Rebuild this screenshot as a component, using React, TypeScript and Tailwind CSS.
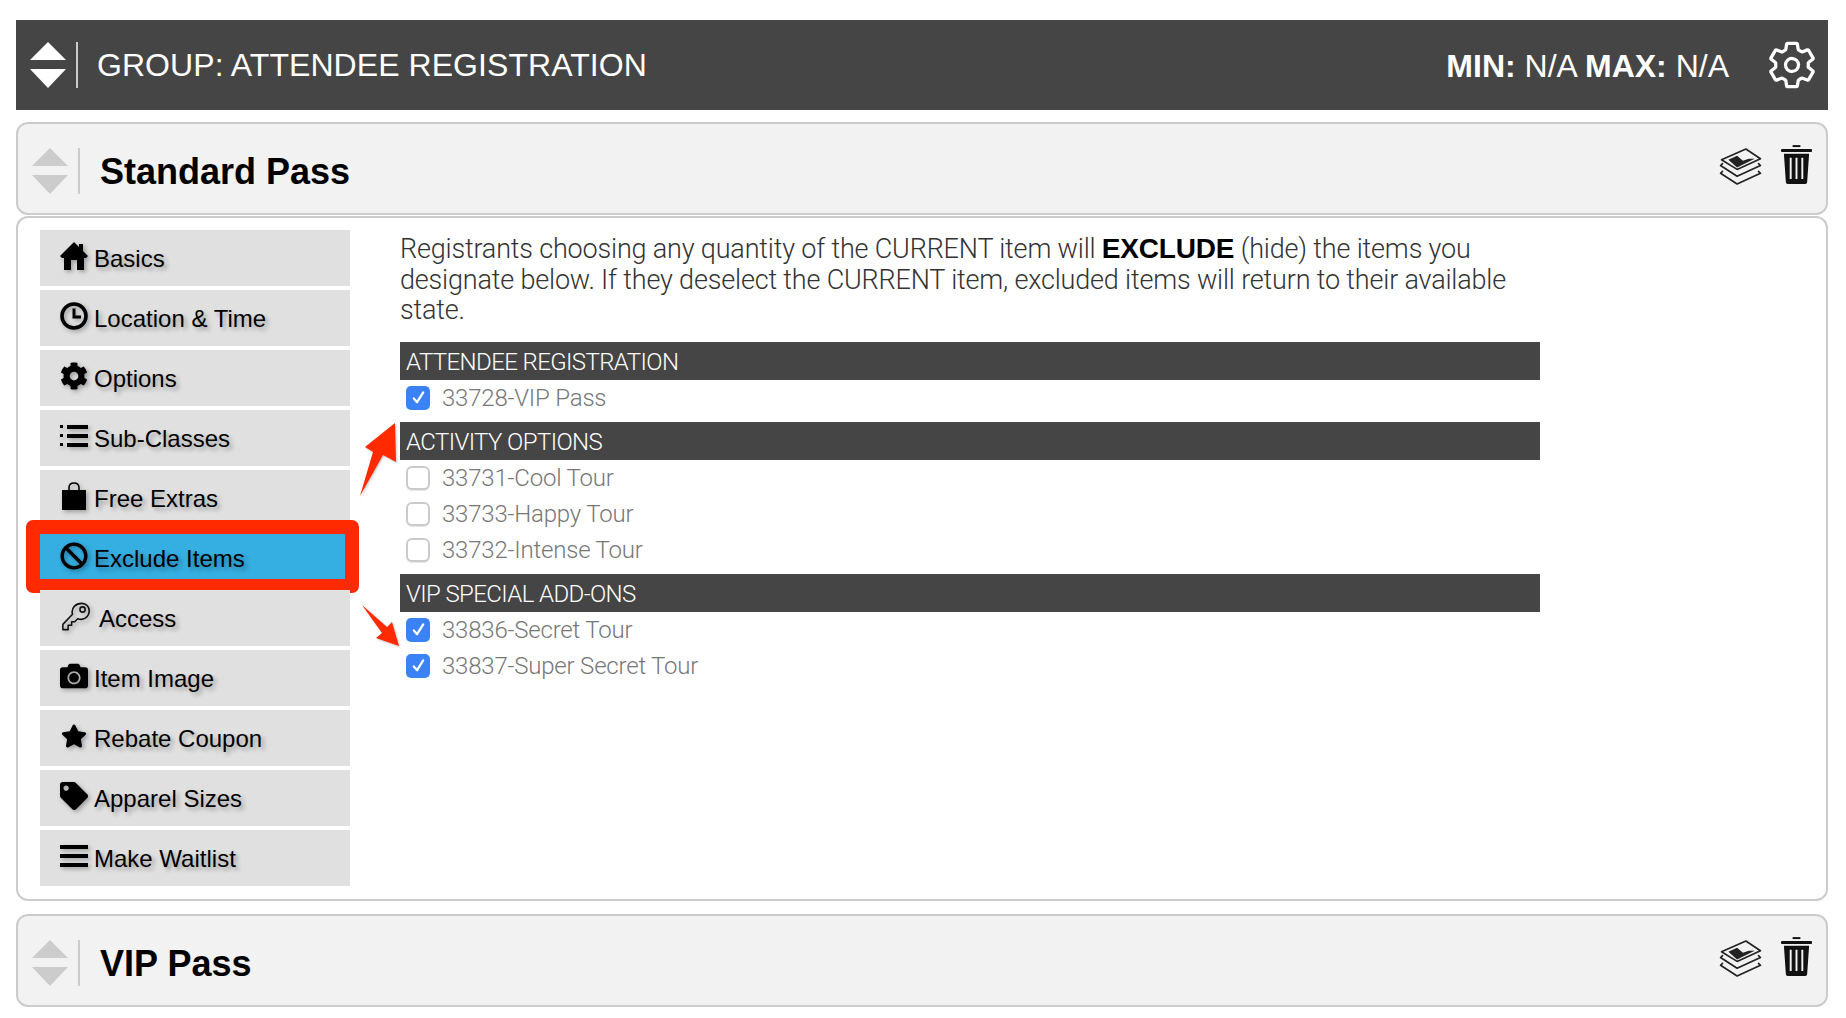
import type { ReactNode } from 'react'
import { FaCog, FaBan, FaCamera, FaStar, FaTag } from 'react-icons/fa'
import { IoSettingsOutline } from 'react-icons/io5'

function SortArrows({ color, line }: { color: string; line: string }) {
  return (
    <div className="flex items-center">
      <svg width="36" height="46" viewBox="0 0 36 46" className={color} fill="currentColor">
        <polygon points="18,0 36,18 0,18" />
        <polygon points="0,27 36,27 18,46" />
      </svg>
      <div className={`ml-[10px] h-[46px] w-[2px] ${line}`} />
    </div>
  )
}

function LayersIcon() {
  return (
    <svg width="44" height="37" viewBox="0 0 44 38" fill="none" stroke="#222" strokeWidth="1.7" strokeLinejoin="round" strokeLinecap="round">
      <path d="M2 12 L27 1 L42 11 L18 22 Z" />
      <path d="M9 12 L18 8 L24 13 L30 11 L36 11 L18 20 Z" fill="#222" stroke="none" />
      <path d="M3 16 L1 18 L18 29 L42 18 L40 16" />
      <path d="M3 24 L1 26 L18 37 L42 26 L40 24" />
    </svg>
  )
}

function TrashIcon() {
  return (
    <svg width="31" height="39" viewBox="0 0 32 40">
      <rect x="12" y="0" width="8" height="2" fill="#111" />
      <rect x="0" y="4" width="32" height="3" rx="1" fill="#111" />
      <path d="M3 9 H29 L27 38 Q27 40 25 40 H7 Q5 40 5 38 Z" fill="#111" />
      <path d="M10 13 V35 M16 13 V35 M22 13 V35" stroke="#f2f2f2" strokeWidth="2" />
    </svg>
  )
}

function ItemCard({ title }: { title: string }) {
  return (
    <div className="flex h-[93px] items-center rounded-xl border-2 border-[#cccccc] bg-[#f2f2f2] px-[14px] pt-1">
      <SortArrows color="text-[#cccccc]" line="bg-[#cccccc]" />
      <h2 className="ml-5 pt-[2px] font-['Liberation_Sans',sans-serif] text-[36px] font-bold text-black">{title}</h2>
      <div className="mb-2 ml-auto flex items-center gap-[18px]">
        <LayersIcon />
        <span className="mb-[5px]">
          <TrashIcon />
        </span>
      </div>
    </div>
  )
}

function KeyIcon() {
  return (
    <svg width="33" height="33" viewBox="0 0 32 32" fill="none" stroke="#111" strokeWidth="1.8" strokeLinejoin="round" className="translate-x-[2px]">
      <path d="M1 25 L12 13.5 C10 6 16 1 22.5 1 C28 1 31.5 5 31 10.5 C30.5 17 24 21 18 18.5 L14.5 22 L11 22 L11 26 L7 26 L7 31 L1 31 Z" />
      <circle cx="23.5" cy="8" r="3" />
    </svg>
  )
}

function HomeIcon() {
  return (
    <svg width="28" height="28" viewBox="0 0 28 28" fill="#000">
      <path fillRule="evenodd" d="M14 0 L19 5 V2 H23 V9 L28 14 L26 16 H24 V28 H17 V18 H11 V28 H4 V16 H2 L0 14 Z" />
    </svg>
  )
}

function ClockIcon() {
  return (
    <svg width="28" height="28" viewBox="0 0 28 28" fill="none" stroke="#000">
      <circle cx="14" cy="14" r="12" strokeWidth="3.6" />
      <path d="M14 6.5 V15 H21" strokeWidth="3" />
    </svg>
  )
}

function ListIcon() {
  return (
    <svg width="28" height="22" viewBox="0 0 28 22" fill="#000">
      <rect x="0" y="0" width="3" height="3" />
      <rect x="0" y="9" width="3" height="3" />
      <rect x="0" y="18" width="3" height="3" />
      <rect x="7" y="0" width="21" height="4" />
      <rect x="7" y="9" width="21" height="4" />
      <rect x="7" y="18" width="21" height="4" />
    </svg>
  )
}

function BagIcon() {
  return (
    <svg width="26" height="28" viewBox="0 0 26 28" fill="#000">
      <path d="M8 9 V6 C8 2 10 1 13 1 C16 1 18 2 18 6 V9" fill="none" stroke="#000" strokeWidth="1.6" />
      <rect x="1" y="8" width="24" height="20" />
    </svg>
  )
}

function BarsIcon() {
  return (
    <svg width="28" height="22" viewBox="0 0 28 22" fill="#000">
      <rect x="0" y="0" width="28" height="4" />
      <rect x="0" y="9" width="28" height="4" />
      <rect x="0" y="18" width="28" height="4" />
    </svg>
  )
}

const navItems: { label: string; icon: ReactNode; active?: boolean; wide?: boolean }[] = [
  { label: 'Basics', icon: <HomeIcon /> },
  { label: 'Location & Time', icon: <ClockIcon /> },
  { label: 'Options', icon: <FaCog size={28} /> },
  { label: 'Sub-Classes', icon: <ListIcon /> },
  { label: 'Free Extras', icon: <BagIcon /> },
  { label: 'Exclude Items', icon: <FaBan size={28} />, active: true },
  { label: 'Access', icon: <KeyIcon />, wide: true },
  { label: 'Item Image', icon: <FaCamera size={28} /> },
  { label: 'Rebate Coupon', icon: <FaStar size={26} /> },
  { label: 'Apparel Sizes', icon: <FaTag size={28} /> },
  { label: 'Make Waitlist', icon: <BarsIcon /> },
]

function NavItem({ label, icon, active, wide }: { label: string; icon: ReactNode; active?: boolean; wide?: boolean }) {
  return (
    <div className={`relative flex h-14 items-center pl-5 font-['Liberation_Sans',sans-serif] text-[24px] text-black [text-shadow:3px_3px_4px_rgba(0,0,0,0.3)] ${active ? 'bg-[#35aee2]' : 'bg-[#e0e0e0]'}`}>
      <span className="-mt-1 flex w-7 justify-center drop-shadow-[2px_2px_2px_rgba(0,0,0,0.3)]">{icon}</span>
      <span className={`pt-[2px] ${wide ? 'ml-[11px]' : 'ml-[6px]'}`}>{label}</span>
      {active && <div className="absolute -top-[10px] -right-[9px] -bottom-[7px] -left-[14px] rounded-[7px] border-[14px] border-[#ff2a00]" />}
    </div>
  )
}

function CheckRow({ label, checked }: { label: string; checked?: boolean }) {
  return (
    <div className="flex h-9 items-center pl-[6px]">
      {checked ? (
        <span className="flex h-6 w-6 items-center justify-center rounded-[5px] bg-[#3b82f6]">
          <svg width="15" height="15" viewBox="0 0 16 16" fill="none" stroke="#fff" strokeWidth="2.4" strokeLinecap="round" strokeLinejoin="round">
            <path d="M3 9 L6.5 13 L13 2.5" />
          </svg>
        </span>
      ) : (
        <span className="h-6 w-6 rounded-[6px] border-2 border-[#cbcbcb] bg-white shadow-[0_1px_1px_rgba(0,0,0,0.1)]" />
      )}
      <span className="ml-3 font-['Roboto',sans-serif] text-[24px] font-light tracking-[-0.2px] text-[#777777]">{label}</span>
    </div>
  )
}

function SectionHead({ label }: { label: string }) {
  return (
    <div className="flex h-[38px] items-center bg-[#454545] pl-[6px] pt-[2px] font-['Roboto',sans-serif] text-[24px] font-light tracking-[-0.6px] text-white">
      {label}
    </div>
  )
}

export default function App() {
  return (
    <div className="relative min-h-[1018px] bg-white pl-4 pr-[18px] pt-5">
      <div className="flex h-[90px] items-center bg-[#454545] pl-[14px] pr-[10px] font-['Liberation_Sans',sans-serif] text-white">
        <SortArrows color="text-white" line="bg-[#cccccc]" />
        <h1 className="ml-[19px] text-[32px] tracking-[0.06px]">GROUP: ATTENDEE REGISTRATION</h1>
        <div className="ml-auto pt-[2px] text-[32px]">
          <b>MIN:</b> N/A <b>MAX:</b> N/A
        </div>
        <IoSettingsOutline size={52} className="ml-[37px]" />
      </div>

      <div className="mt-3">
        <ItemCard title="Standard Pass" />
      </div>

      <div className="mt-px flex h-[685px] rounded-xl border-2 border-[#cccccc] pl-[22px] pt-3">
        <div className="flex w-[310px] flex-col gap-1">
          {navItems.map((item) => (
            <NavItem key={item.label} {...item} />
          ))}
        </div>
        <div className="ml-[50px] w-[1140px] pt-1">
          <p className="font-['Roboto',sans-serif] text-[27px] leading-[30.5px] font-light tracking-[-0.18px] text-[#333333]">
            Registrants choosing any quantity of the CURRENT item will <b className="font-['Liberation_Sans',sans-serif] text-[28px] font-bold text-black">EXCLUDE</b> (hide) the items you designate below. If they deselect the CURRENT item, excluded items will return to their available state.
          </p>
          <div className="mt-[16px]">
            <SectionHead label="ATTENDEE REGISTRATION" />
            <div className="pb-[6px]">
              <CheckRow label="33728-VIP Pass" checked />
            </div>
            <SectionHead label="ACTIVITY OPTIONS" />
            <div className="pb-[6px]">
              <CheckRow label="33731-Cool Tour" />
              <CheckRow label="33733-Happy Tour" />
              <CheckRow label="33732-Intense Tour" />
            </div>
            <SectionHead label="VIP SPECIAL ADD-ONS" />
            <CheckRow label="33836-Secret Tour" checked />
            <CheckRow label="33837-Super Secret Tour" checked />
          </div>
        </div>
      </div>

      <div className="mt-[13px]">
        <ItemCard title="VIP Pass" />
      </div>

      {/* annotation arrows */}
      <svg className="pointer-events-none absolute top-0 left-0 drop-shadow-[1px_1px_1px_rgba(0,0,0,0.25)]" width="420" height="660" viewBox="0 0 420 660">
        <polygon points="360,496 373,452 365,447 395,423 396,462 383,455" fill="#ff2a00" />
        <polygon points="362,605 387,627 392,622 399,646 376,638 382,633" fill="#ff2a00" />
      </svg>
    </div>
  )
}
